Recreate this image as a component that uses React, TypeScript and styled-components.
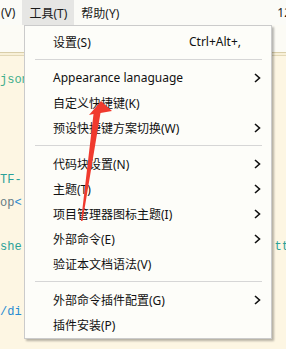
import React from "react";
import styled, { createGlobalStyle } from "styled-components";

const Global = createGlobalStyle`
  html, body { margin: 0; padding: 0; }
  body {
    width: 286px; height: 349px; overflow: hidden;
    background: #fdf6e3;
    font-family: "Noto Sans", "Noto Sans CJK SC", sans-serif;
  }
`;

const Page = styled.div`
  position: relative;
  width: 286px;
  height: 349px;
  overflow: hidden;
  background: #fdf6e3;
`;

const MenuBar = styled.div`
  display: flex;
  align-items: stretch;
  height: 25px;
  background: #fbfbf7;
  font-size: 12px;
  color: #1a1a1a;
  white-space: nowrap;
`;

const BarItem = styled.div<{ $active?: boolean; $pl?: number; $mr?: number }>`
  display: flex;
  align-items: center;
  padding: 0 ${(p) => (p.$mr !== undefined ? 0 : 7)}px 0 ${(p) => (p.$pl ?? 7)}px;
  margin-right: ${(p) => p.$mr ?? 0}px;
  background: ${(p) => (p.$active ? "#e6e6e4" : "transparent")};
`;

const BarSpacer = styled.div`
  flex: 1;
`;

const TabStrip = styled.div`
  height: 27px;
  background: #fcfbf5;
  border-bottom: 1px solid #d9cea9;
`;

const TabGap = styled.div`
  height: 2px;
  background: #f8f0d8;
  border-bottom: 1px solid #e3d8b6;
`;

const Editor = styled.div`
  display: flex;
  flex-direction: column;
  font-family: "Liberation Mono", monospace;
  font-size: 12px;
`;

const CodeLine = styled.div<{ $gap: number }>`
  display: flex;
  justify-content: space-between;
  height: 22px;
  line-height: 22px;
  margin-top: ${(p) => p.$gap}px;
  margin-right: -3px;
  white-space: pre;
`;

const Tok = styled.span<{ $c: string }>`
  color: ${(p) => p.$c};
`;

const Dropdown = styled.div`
  position: absolute;
  left: 24px;
  top: 25px;
  width: 248px;
  box-sizing: border-box;
  background: #fdfdf9;
  border: 1px solid #cbcbcb;
  box-shadow: 2px 2px 2px rgba(0, 0, 0, 0.28);
  padding: 3px 0 1px;
  font-size: 12px;
  color: #111;
  white-space: nowrap;
`;

const Item = styled.div`
  display: flex;
  align-items: center;
  height: 25px;
  padding: 0 10px 0 28px;
`;

const Label = styled.span`
  flex: 1;
`;

const Shortcut = styled.span``;

const EndSlot = styled.span`
  display: flex;
  justify-content: flex-end;
  align-items: center;
  width: 20px;
`;

const Separator = styled.div`
  height: 1px;
  background: #d6d6d6;
  margin: 5px 9px 5px 10px;
`;

const ArrowLayer = styled.svg`
  position: absolute;
  left: 0;
  top: 0;
  pointer-events: none;
`;

const Chevron = () => (
  <svg width="7" height="10" viewBox="0 0 7 10">
    <polyline points="1,1 5.5,5 1,9" fill="none" stroke="#111" strokeWidth="1.6" />
  </svg>
);

type Entry =
  | { sep: true }
  | { sep?: false; label: string; shortcut?: string; sub?: boolean };

const entries: Entry[] = [
  { label: "设置(S)", shortcut: "Ctrl+Alt+," },
  { sep: true },
  { label: "Appearance lanaguage", sub: true },
  { label: "自定义快捷键(K)" },
  { label: "预设快捷键方案切换(W)", sub: true },
  { sep: true },
  { label: "代码块设置(N)", sub: true },
  { label: "主题(T)", sub: true },
  { label: "项目管理器图标主题(I)", sub: true },
  { label: "外部命令(E)", sub: true },
  { label: "验证本文档语法(V)" },
  { sep: true },
  { label: "外部命令插件配置(G)", sub: true },
  { label: "插件安装(P)" },
];

export default function App() {
  return (
    <Page>
      <Global />
      <MenuBar>
        <BarItem $pl={1}>(V)</BarItem>
        <BarItem $active>工具(T)</BarItem>
        <BarItem>帮助(Y)</BarItem>
        <BarSpacer />
        <BarItem $pl={0} $mr={-5}>12</BarItem>
      </MenuBar>
      <TabStrip />
      <TabGap />
      <Editor>
        <CodeLine $gap={13}>
          <Tok $c="#3fae8c">json</Tok>
        </CodeLine>
        <CodeLine $gap={78}>
          <Tok $c="#2aa198">TF-</Tok>
        </CodeLine>
        <CodeLine $gap={1}>
          <span>
            <Tok $c="#657b83">op</Tok>
            <Tok $c="#268bd2">&lt;</Tok>
          </span>
        </CodeLine>
        <CodeLine $gap={22}>
          <Tok $c="#2aa198">she</Tok>
          <Tok $c="#2aa198">tt</Tok>
        </CodeLine>
        <CodeLine $gap={43}>
          <Tok $c="#268bd2">/di</Tok>
        </CodeLine>
      </Editor>
      <Dropdown>
        {entries.map((e, i) =>
          e.sep ? (
            <Separator key={i} />
          ) : (
            <Item key={i}>
              <Label>{e.label}</Label>
              {e.shortcut && <Shortcut>{e.shortcut}</Shortcut>}
              <EndSlot>{e.sub && <Chevron />}</EndSlot>
            </Item>
          )
        )}
      </Dropdown>
      <ArrowLayer width="286" height="349" viewBox="0 0 286 349">
        <polygon
          points="101,101 112,111 100.5,113 82.5,221 81,221 93.5,114 89,115"
          fill="#f03a2e"
        />
      </ArrowLayer>
    </Page>
  );
}
